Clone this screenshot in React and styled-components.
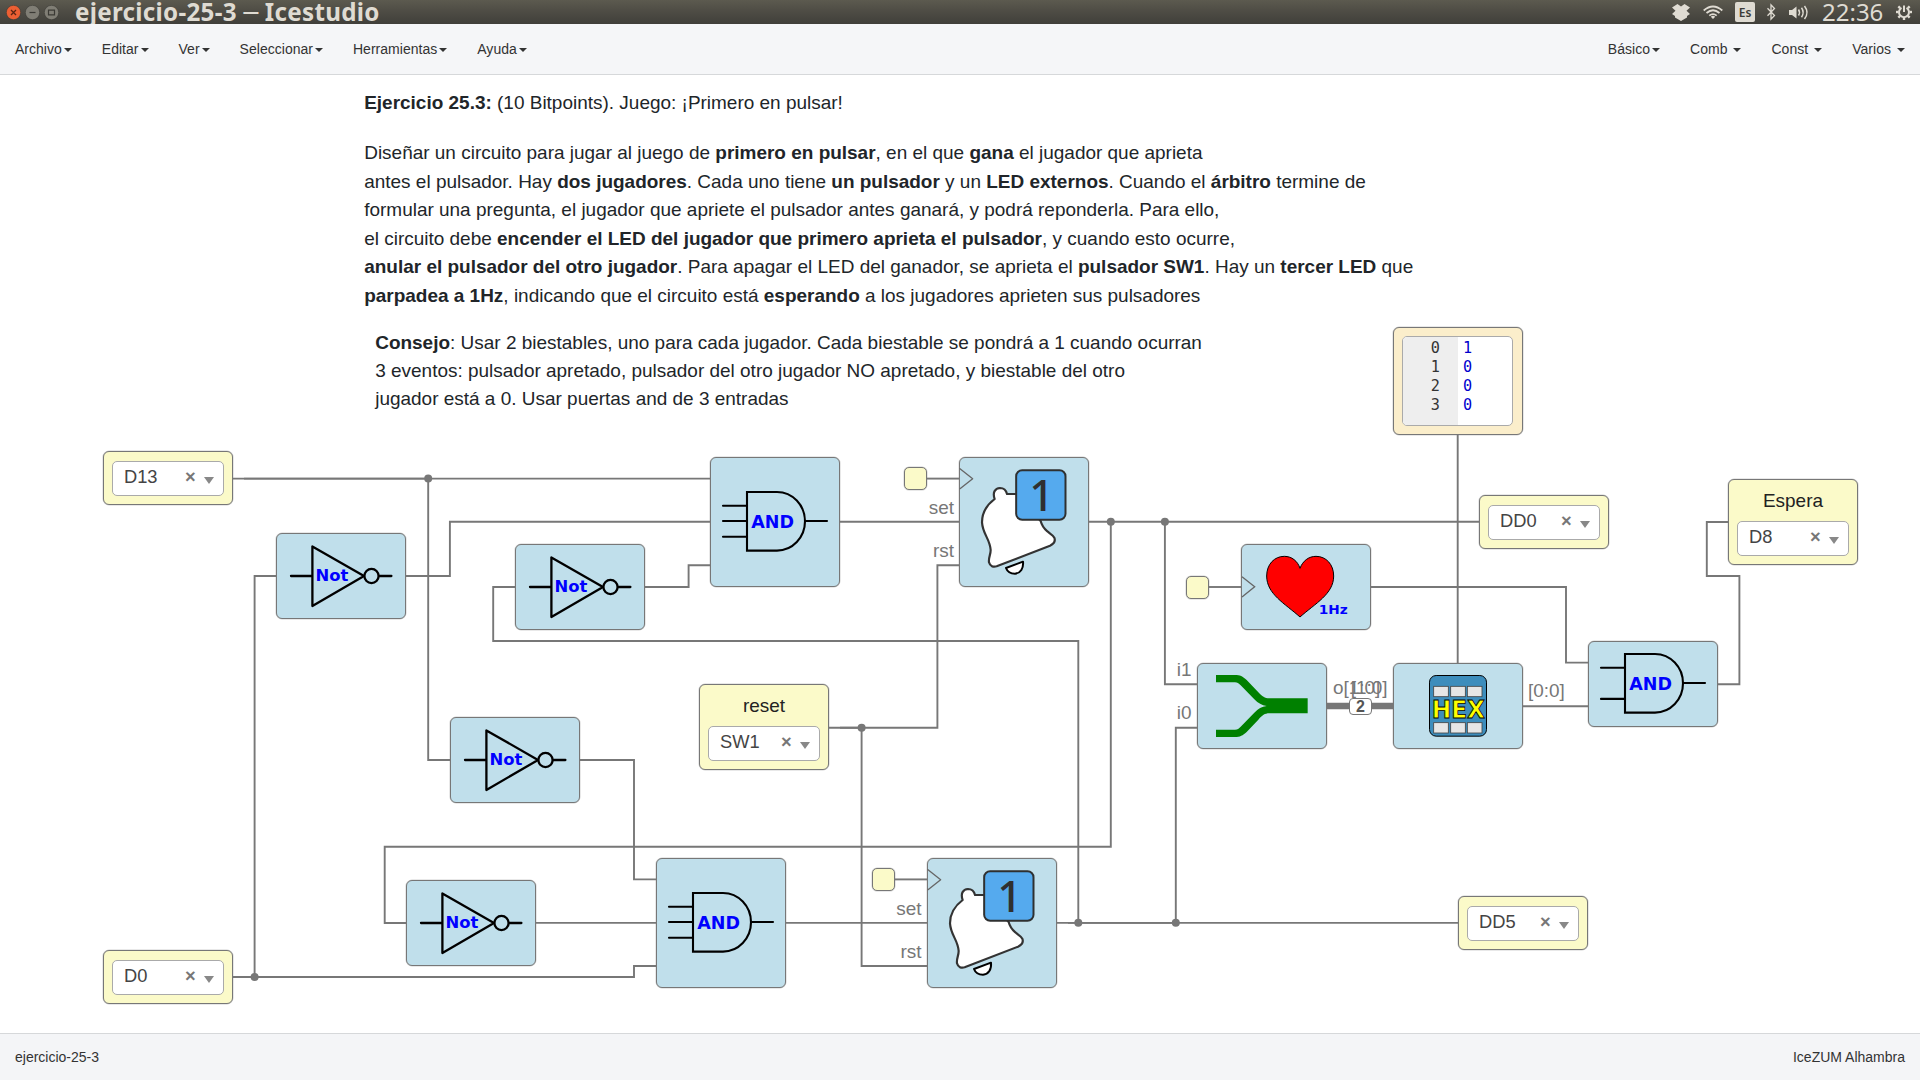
import React from "react";
import styled, { createGlobalStyle } from "styled-components";

const SANS = '"Liberation Sans", Arial, sans-serif';
const CANVAS_TOP = 75;

const GlobalStyle = createGlobalStyle`
  * { box-sizing: border-box; }
  body { margin: 0; background: #fff; overflow: hidden; font-family: ${SANS}; }
`;

const Window = styled.div`
  display: flex;
  flex-direction: column;
  width: 1920px;
  height: 1080px;
  background: #fff;
`;

/* ---------- desktop title bar ---------- */

const TitleBar = styled.header`
  display: flex;
  align-items: center;
  height: 24px;
  padding: 0 8px 0 6px;
  background: linear-gradient(#5c5a4f, #504e46 40%, #403f3a);
  color: #dfdbd2;
  font-family: "Noto Sans", "Open Sans", sans-serif;
`;

const WindowButtons = styled.div`
  display: flex;
  gap: 4px;
`;

const WindowTitle = styled.h1`
  flex: 1;
  margin: 0 0 0 16px;
  font-family: "Noto Sans", "DejaVu Sans", sans-serif;
  font-size: 24.2px;
  font-weight: 700;
  line-height: 24px;
  letter-spacing: 0.28px;
  white-space: pre;
`;

const Tray = styled.div`
  display: flex;
  align-items: center;
  height: 24px;
`;

const TrayIcon = styled.svg`
  display: block;
  flex: none;
  width: ${(p) => p.$w}px;
  height: 24px;
  margin-right: ${(p) => p.$gap}px;
  overflow: visible;
`;

const Layout = styled.span`
  display: flex;
  align-items: center;
  justify-content: center;
  width: 20px;
  height: 20px;
  margin-right: 12px;
  border-radius: 2px;
  background: #dfdbd2;
  color: #3c3b37;
  font-size: 12px;
  font-weight: 600;
`;

const Clock = styled.span`
  width: 62px;
  margin-right: 12px;
  font-size: 24px;
  line-height: 24px;
`;

/* ---------- application bars ---------- */

const MenuBar = styled.nav`
  display: flex;
  justify-content: space-between;
  height: 51px;
  background: #f5f6f8;
  border-bottom: 1px solid #d6d8da;
`;

const MenuGroup = styled.div`
  display: flex;
`;

const MenuItem = styled.span`
  display: flex;
  align-items: center;
  padding: 0 15px;
  height: 50px;
  font-size: 14px;
  letter-spacing: ${(p) => (p.$end ? "0.04px" : "0.02px")};
  color: #333;
  white-space: pre;

  &::after {
    content: "";
    margin: 1px 0 0 2px;
    border-top: 4px solid #333;
    border-left: 4px solid transparent;
    border-right: 4px solid transparent;
  }
`;

const StatusBar = styled.footer`
  display: flex;
  align-items: center;
  justify-content: space-between;
  height: 47px;
  padding: 0 15px;
  background: #f4f5f7;
  border-top: 1px solid #d6d8da;
  font-size: 14px;
  color: #333;
`;

/* ---------- canvas ---------- */

const Canvas = styled.main`
  position: relative;
  flex: 1;
  overflow: hidden;
`;

const Wires = styled.svg`
  position: absolute;
  inset: 0;
  width: 1920px;
  height: 958px;
`;

const Placed = styled.div`
  position: absolute;
  left: ${(p) => p.$x}px;
  top: ${(p) => p.$y - CANVAS_TOP}px;
`;

const Note = styled(Placed)`
  font-size: 18.985px;
  line-height: 28.48px;
  color: #212529;
  white-space: nowrap;

  p { margin: 0 0 21.6px; }
`;

const Block = styled(Placed)`
  width: 130px;
  height: ${(p) => p.$h}px;
  border: 1px solid #777;
  border-radius: 6px;
  background: ${(p) => p.$fill || "#c0dfeb"};
  box-shadow: 0 0 0 0.5px rgba(119, 119, 119, 0.35);

  > svg {
    display: block;
    margin: -1px;
    width: 130px;
    height: ${(p) => p.$h}px;
  }
`;

const PinBlock = styled(Block)`
  display: flex;
  flex-direction: column;
  justify-content: flex-end;
  padding: 0 8px 8px;
`;

const PinName = styled.div`
  flex: 1;
  padding-top: 10px;
  font-size: 18.95px;
  line-height: 22px;
  text-align: center;
  color: #222;
`;

const Select = styled.div`
  display: flex;
  align-items: center;
  height: 35px;
  padding: ${(p) => (p.$low ? "1px" : "0")} 9px 0 11px;
  border: 1px solid #aaa;
  border-radius: 5px;
  background: #fff;
  color: #444;
  font-size: 18.3px;
  line-height: 30px;
`;

const SelectValue = styled.span`
  flex: 1;
  margin-top: -4px;
`;

const SelectClear = styled.span`
  width: 11px;
  margin: -4px 8px 0 0;
  font-size: 18.3px;
  font-weight: bold;
  color: #777;
`;

const SelectArrow = styled.i`
  margin-top: 3px;
  border-top: 7px solid #888;
  border-left: 5.5px solid transparent;
  border-right: 5.5px solid transparent;
`;

const ClockPin = styled(Placed)`
  width: 23px;
  height: 23px;
  border: 1px solid #777;
  border-radius: 5px;
  background: #fbfac9;
  box-shadow: 0 0 0 0.5px rgba(119, 119, 119, 0.35);
`;

const PortLabel = styled(Placed)`
  font-size: 18.95px;
  line-height: 22px;
  color: #777;
  white-space: nowrap;
  transform: ${(p) => (p.$end ? "translateX(-100%)" : "none")};
`;

const BusSize = styled(Placed)`
  display: flex;
  align-items: center;
  justify-content: center;
  width: 23px;
  height: 17px;
  border: 1px solid #777;
  border-radius: 4px;
  background: #fff;
  color: #555;
  font-size: 16px;
  font-weight: bold;
  line-height: 15px;
`;

const MemoryBlock = styled(Block)`
  padding: 8px;
`;

const MemoryTable = styled.div`
  display: grid;
  grid-template-columns: 55px 1fr;
  width: 111px;
  height: 90px;
  border: 1px solid #aaa;
  border-radius: 5px;
  background: #fff;
  overflow: hidden;
  font-family: "DejaVu Sans Mono", monospace;
  font-size: 15.2px;
  line-height: 19px;
`;

const Addresses = styled.div`
  padding: 2px 18px 0 0;
  background: #eee;
  color: #333;
  text-align: right;
`;

const Values = styled.div`
  padding: 2px 0 0 5px;
  color: #0000cd;
`;

/* ---------- data ---------- */

const leftMenus = ["Archivo", "Editar", "Ver", "Seleccionar", "Herramientas", "Ayuda"];
const rightMenus = ["Básico", "Comb ", "Const ", "Varios "];

const wires = [
  "M233 478.6H710",
  "M244 478.6H428.2V760H450",
  "M406 576H449.9V521.8H710",
  "M233 977H634V966H656",
  "M254.6 977V576H276",
  "M515 587H493.2V641H1078.3V922.8",
  "M645 587H688.6V565.3H710",
  "M840 521.8H959",
  "M927 478.6H959",
  "M829 727.8H937.4V565.3H959",
  "M840 727.8H861.6V966H927",
  "M1089 521.8H1479",
  "M1110.8 521.8V846.8H384.7V923H406",
  "M1164.9 521.8V684.3H1197",
  "M580 760H634V879.4H656",
  "M536 922.9H656",
  "M786 922.9H927",
  "M895 879.4H927",
  "M1057 922.9H1458",
  "M1068 922.9H1175.8V727.8H1197",
  "M1209 587H1241",
  "M1371 587H1566V662.6H1588",
  "M1457.7 435V663",
  "M1523 706.3H1588",
  "M1718 684.3H1739.4V576H1706.8V522H1728",
];

const junctions = [
  [428.2, 478.6], [254.6, 977], [861.6, 727.8], [1110.8, 521.8],
  [1164.9, 521.8], [1078.3, 922.8], [1175.8, 922.8],
];

const nots = [[276, 533], [515, 544], [450, 717], [406, 880]];
const and3s = [[710, 457], [656, 858]];
const flipflops = [[959, 457], [927, 858]];
const clockPins = [[904, 467], [872, 868], [1186, 575.5]];

const pins = [
  { x: 103, y: 451, value: "D13" },
  { x: 103, y: 950, value: "D0" },
  { x: 699, y: 684, value: "SW1", name: "reset" },
  { x: 1479, y: 495, value: "DD0" },
  { x: 1458, y: 896, value: "DD5" },
  { x: 1728, y: 479, value: "D8", name: "Espera" },
];

const portLabels = [
  { x: 954, y: 497, text: "set", end: true },
  { x: 954, y: 540, text: "rst", end: true },
  { x: 921.5, y: 898, text: "set", end: true },
  { x: 921.5, y: 941, text: "rst", end: true },
  { x: 1191.5, y: 659, text: "i1", end: true },
  { x: 1191.5, y: 702, text: "i0", end: true },
  { x: 1333, y: 677, text: "o[1:0]" },
  { x: 1387.5, y: 677, text: "[1:0]", end: true },
  { x: 1528, y: 680, text: "[0:0]" },
];

/* ---------- drawings ---------- */

const gateText = { fontFamily: '"DejaVu Sans", sans-serif', fontWeight: "bold", fill: "#0000ff" };

const NotSymbol = () => (
  <svg viewBox="0 0 130 86" fill="none" stroke="#000" strokeWidth="2.3" strokeLinecap="round" strokeLinejoin="round">
    <path d="M15 43H36.4M36.4 13.4V73L88 43ZM103 43H115.4" />
    <circle cx="95.5" cy="43" r="7.1" />
    <text x="39.6" y="48" fontSize="16.4" stroke="none" {...gateText}>Not</text>
  </svg>
);

const AndSymbol = ({ inputs, h }) => {
  const c = h === 130 ? 64.3 : 42.3;
  return (
    <svg viewBox={`0 0 130 ${h}`} fill="none" stroke="#000" strokeWidth="2.1" strokeLinecap="round">
      {inputs.map((dy) => <path key={dy} d={`M13 ${c + dy}H37`} />)}
      <path d={`M37 ${c - 29.3}H67A28 29.3 0 0 1 67 ${c + 29.3}H37Z`} />
      <path d={`M95 ${c - 0.3}H117`} />
      <text x="41.3" y={c + 6.4} fontSize="17.5" stroke="none" {...gateText}>AND</text>
    </svg>
  );
};

const BellSymbol = () => (
  <svg viewBox="957 81 390 390" fill="none" strokeLinejoin="round" strokeLinecap="round">
    <path d="M960 116L998 146L960 176" stroke="#666" strokeWidth="4" />
    <path
      d="M1130 192H1101C1098 179 1089 174 1080 174C1065 175 1057 187 1064 207C1036 228 1026 252 1026 277C1028 312 1050 327 1052 360C1052 375 1045 382 1047 397C1050 409 1060 412 1070 409L1230 347C1243 341 1246 331 1243 323C1238 314 1230 312 1222 304C1210 294 1205 285 1202 273Z"
      fill="#fff" stroke="#333" strokeWidth="6.5"
    />
    <path d="M1098 414C1102 425 1112 431 1125 431C1142 430 1151 415 1149 395Z" fill="#fff" stroke="#000" strokeWidth="6" />
    <rect x="1128.500" y="120.500" width="148" height="149" rx="18" fill="#55aaee" stroke="#2f3030" strokeWidth="6" />
    <text x="1168" y="242" fontSize="130" fontWeight="500" fontFamily='"Noto Sans", "Open Sans", sans-serif' fill="#2f3030">1</text>
  </svg>
);

const HeartSymbol = () => (
  <svg viewBox="363 702 390 258" fill="none">
    <path d="M366 800L404 830L366 861" stroke="#666" strokeWidth="4" />
    <path
      d="M540 775C533 753 515 739 493 739C463 739 440 763 440 798C440 852 494 880 540 921C586 880 641 852 641 798C641 763 618 739 588 739C566 739 548 753 540 775Z"
      fill="#f00" stroke="#000" strokeWidth="3"
    />
    <text x="596" y="911" fontSize="35" textLength="87" lengthAdjust="spacingAndGlyphs" {...gateText}>1Hz</text>
  </svg>
);

const JoinSymbol = () => (
  <svg viewBox="231 1059 390 258">
    <path
      d="M288 1095H345C360 1095 368 1099 380 1110L415 1147C427 1159 434 1165 448 1165H563V1210H448C434 1210 427 1216 415 1229L380 1266C368 1277 360 1281 345 1281H288V1259H345C353 1259 356 1256 362 1250L403 1208C415 1196 425 1190 440 1188C425 1186 415 1180 403 1168L362 1126C356 1120 352 1117 345 1117H288Z"
      fill="#008000"
    />
  </svg>
);

const HexSymbol = () => (
  <svg viewBox="819 1059 390 258">
    <rect x="928.500" y="1096.500" width="171" height="182" rx="20" fill="#3d8dbc" stroke="#000" strokeWidth="3" />
    {[1129, 1238].map((y) =>
      [941, 992, 1042].map((x) => (
        <rect key={`${x}-${y}`} x={x} y={y} width="44" height="31" fill="#e6e6e6" stroke="#444" strokeWidth="2.5" />
      ))
    )}
    <text
      x="935" y="1223" fontSize="74" fontWeight="bold" textLength="160" lengthAdjust="spacingAndGlyphs"
      fontFamily='"DejaVu Sans", sans-serif' fill="#ff0" stroke="#000" strokeWidth="2.5"
    >HEX</text>
  </svg>
);

const CloseButton = () => (
  <svg width="15" height="15" viewBox="0 0 15 15">
    <circle cx="7.500" cy="7.500" r="7.200" fill="#ec5f33" stroke="#3b3a35" strokeWidth=".6" />
    <path d="M5 5L10 10M10 5L5 10" stroke="#5a2413" strokeWidth="1.300" />
  </svg>
);

const GreyButton = ({ d }) => (
  <svg width="15" height="15" viewBox="0 0 15 15">
    <circle cx="7.500" cy="7.500" r="7.200" fill="#807e75" stroke="#3b3a35" strokeWidth=".6" />
    <path d={d} fill="none" stroke="#3b3a35" strokeWidth="1.200" />
  </svg>
);

const Pin = ({ x, y, value, name }) => (
  <PinBlock $x={x} $y={y} $h={name ? 86 : 54} $fill="#fbfac9">
    {name && <PinName>{name}</PinName>}
    <Select $low={Boolean(name)}>
      <SelectValue>{value}</SelectValue>
      <SelectClear>×</SelectClear>
      <SelectArrow />
    </Select>
  </PinBlock>
);

const gearTeeth = [45, 90, 135, 180, 225, 270, 315];

export default function App() {
  return (
    <Window>
      <GlobalStyle />
      <TitleBar>
        <WindowButtons>
          <CloseButton />
          <GreyButton d="M4.500 7.500H10.500" />
          <GreyButton d="M4.500 5.200H10.500V9.800H4.500Z" />
        </WindowButtons>
        <WindowTitle>ejercicio-25-3 ─ Icestudio</WindowTitle>
        <Tray>
          <TrayIcon $w={18} $gap={13} viewBox="0 0 18 24" fill="#dfdbd2">
            <path d="M5.500 4L9 6.500L12.500 4L18 7.500L14.500 10.800L18 14L15 16V17.500L9 21L3 17.500V16L0 14L3.500 10.800L0 7.500Z" />
          </TrayIcon>
          <TrayIcon $w={20} $gap={12} viewBox="0 0 20 24" fill="none" stroke="#dfdbd2" strokeWidth="1.700">
            <path d="M.7 10.500Q10 2.500 19.300 10.500M3.500 13Q10 7.500 16.500 13M6.300 15.600Q10 12.500 13.700 15.600" />
            <path d="M7.800 16.700Q10 15 12.200 16.700L10 19Z" fill="#dfdbd2" stroke="none" />
          </TrayIcon>
          <Layout>Es</Layout>
          <TrayIcon $w={8} $gap={14} viewBox="0 0 8 24" fill="none" stroke="#dfdbd2" strokeWidth="1.300">
            <path d="M.5 8.200L7.500 15.500L4 19.200V4.800L7.500 8.500L.5 15.800" />
          </TrayIcon>
          <TrayIcon $w={20} $gap={13} viewBox="0 0 20 24" fill="none" stroke="#dfdbd2" strokeWidth="1.500">
            <path d="M0 10H3L7.500 6.500V18.500L3 15H0Z" fill="#dfdbd2" stroke="none" />
            <path d="M9.500 9.500Q11.500 12.500 9.500 15.500M12.500 7.800Q15.800 12.500 12.500 17.200M15.500 6Q20.500 12.500 15.500 19" />
          </TrayIcon>
          <Clock>22:36</Clock>
          <TrayIcon $w={16} $gap={0} viewBox="0 0 16 24" fill="none" stroke="#dfdbd2">
            <path d="M5.500 7.800A5 5 0 1 0 10.500 7.800" strokeWidth="2" />
            <path d="M8 5.500V12" strokeWidth="2" />
            {gearTeeth.map((a) => (
              <path key={a} d="M8 6.500V4" strokeWidth="2.400" transform={`rotate(${a} 8 12)`} />
            ))}
          </TrayIcon>
        </Tray>
      </TitleBar>

      <MenuBar>
        <MenuGroup>{leftMenus.map((m) => <MenuItem key={m}>{m}</MenuItem>)}</MenuGroup>
        <MenuGroup>{rightMenus.map((m) => <MenuItem key={m} $end>{m}</MenuItem>)}</MenuGroup>
      </MenuBar>

      <Canvas>
        <Note $x={364.2} $y={89.15}>
          <p><b>Ejercicio 25.3:</b> (10 Bitpoints). Juego: ¡Primero en pulsar!</p>
          <p>
            Diseñar un circuito para jugar al juego de <b>primero en pulsar</b>, en el que <b>gana</b> el jugador que aprieta<br />
            antes el pulsador. Hay <b>dos jugadores</b>. Cada uno tiene <b>un pulsador</b> y un <b>LED externos</b>. Cuando el <b>árbitro</b> termine de<br />
            formular una pregunta, el jugador que apriete el pulsador antes ganará, y podrá reponderla. Para ello,<br />
            el circuito debe <b>encender el LED del jugador que primero aprieta el pulsador</b>, y cuando esto ocurre,<br />
            <b>anular el pulsador del otro jugador</b>. Para apagar el LED del ganador, se aprieta el <b>pulsador SW1</b>. Hay un <b>tercer LED</b> que<br />
            <b>parpadea a 1Hz</b>, indicando que el circuito está <b>esperando</b> a los jugadores aprieten sus pulsadores
          </p>
        </Note>
        <Note $x={375.2} $y={328.5}>
          <p>
            <b>Consejo</b>: Usar 2 biestables, uno para cada jugador. Cada biestable se pondrá a 1 cuando ocurran<br />
            3 eventos: pulsador apretado, pulsador del otro jugador NO apretado, y biestable del otro<br />
            jugador está a 0. Usar puertas and de 3 entradas
          </p>
        </Note>

        <Wires viewBox="0 75 1920 958" fill="none" stroke="#777" strokeWidth="1.900">
          {wires.map((d) => <path key={d} d={d} />)}
          <path d="M1327 706H1393" strokeWidth="6.300" />
          {junctions.map(([x, y]) => <circle key={x} cx={x} cy={y} r="4" fill="#777" stroke="none" />)}
        </Wires>

        {nots.map(([x, y]) => <Block key={x} $x={x} $y={y} $h={86}><NotSymbol /></Block>)}
        {and3s.map(([x, y]) => (
          <Block key={x} $x={x} $y={y} $h={130}><AndSymbol h={130} inputs={[-15.6, -0.3, 15.5]} /></Block>
        ))}
        <Block $x={1588} $y={641} $h={86}><AndSymbol h={86} inputs={[-15.6, 15.6]} /></Block>
        {flipflops.map(([x, y]) => <Block key={x} $x={x} $y={y} $h={130}><BellSymbol /></Block>)}
        <Block $x={1241} $y={544} $h={86}><HeartSymbol /></Block>
        <Block $x={1197} $y={663} $h={86}><JoinSymbol /></Block>
        <Block $x={1393} $y={663} $h={86}><HexSymbol /></Block>

        {clockPins.map(([x, y]) => <ClockPin key={x} $x={x} $y={y} />)}
        {pins.map((p) => <Pin key={p.value} {...p} />)}

        <MemoryBlock $x={1393} $y={327} $h={108} $fill="#fbeecb">
          <MemoryTable>
            <Addresses>{[0, 1, 2, 3].map((n) => <div key={n}>{n}</div>)}</Addresses>
            <Values>{[1, 0, 0, 0].map((n, i) => <div key={i}>{n}</div>)}</Values>
          </MemoryTable>
        </MemoryBlock>

        {portLabels.map((l) => (
          <PortLabel key={`${l.x}-${l.y}`} $x={l.x} $y={l.y} $end={l.end}>{l.text}</PortLabel>
        ))}
        <BusSize $x={1349} $y={698}>2</BusSize>
      </Canvas>

      <StatusBar>
        <span>ejercicio-25-3</span>
        <span>IceZUM Alhambra</span>
      </StatusBar>
    </Window>
  );
}
